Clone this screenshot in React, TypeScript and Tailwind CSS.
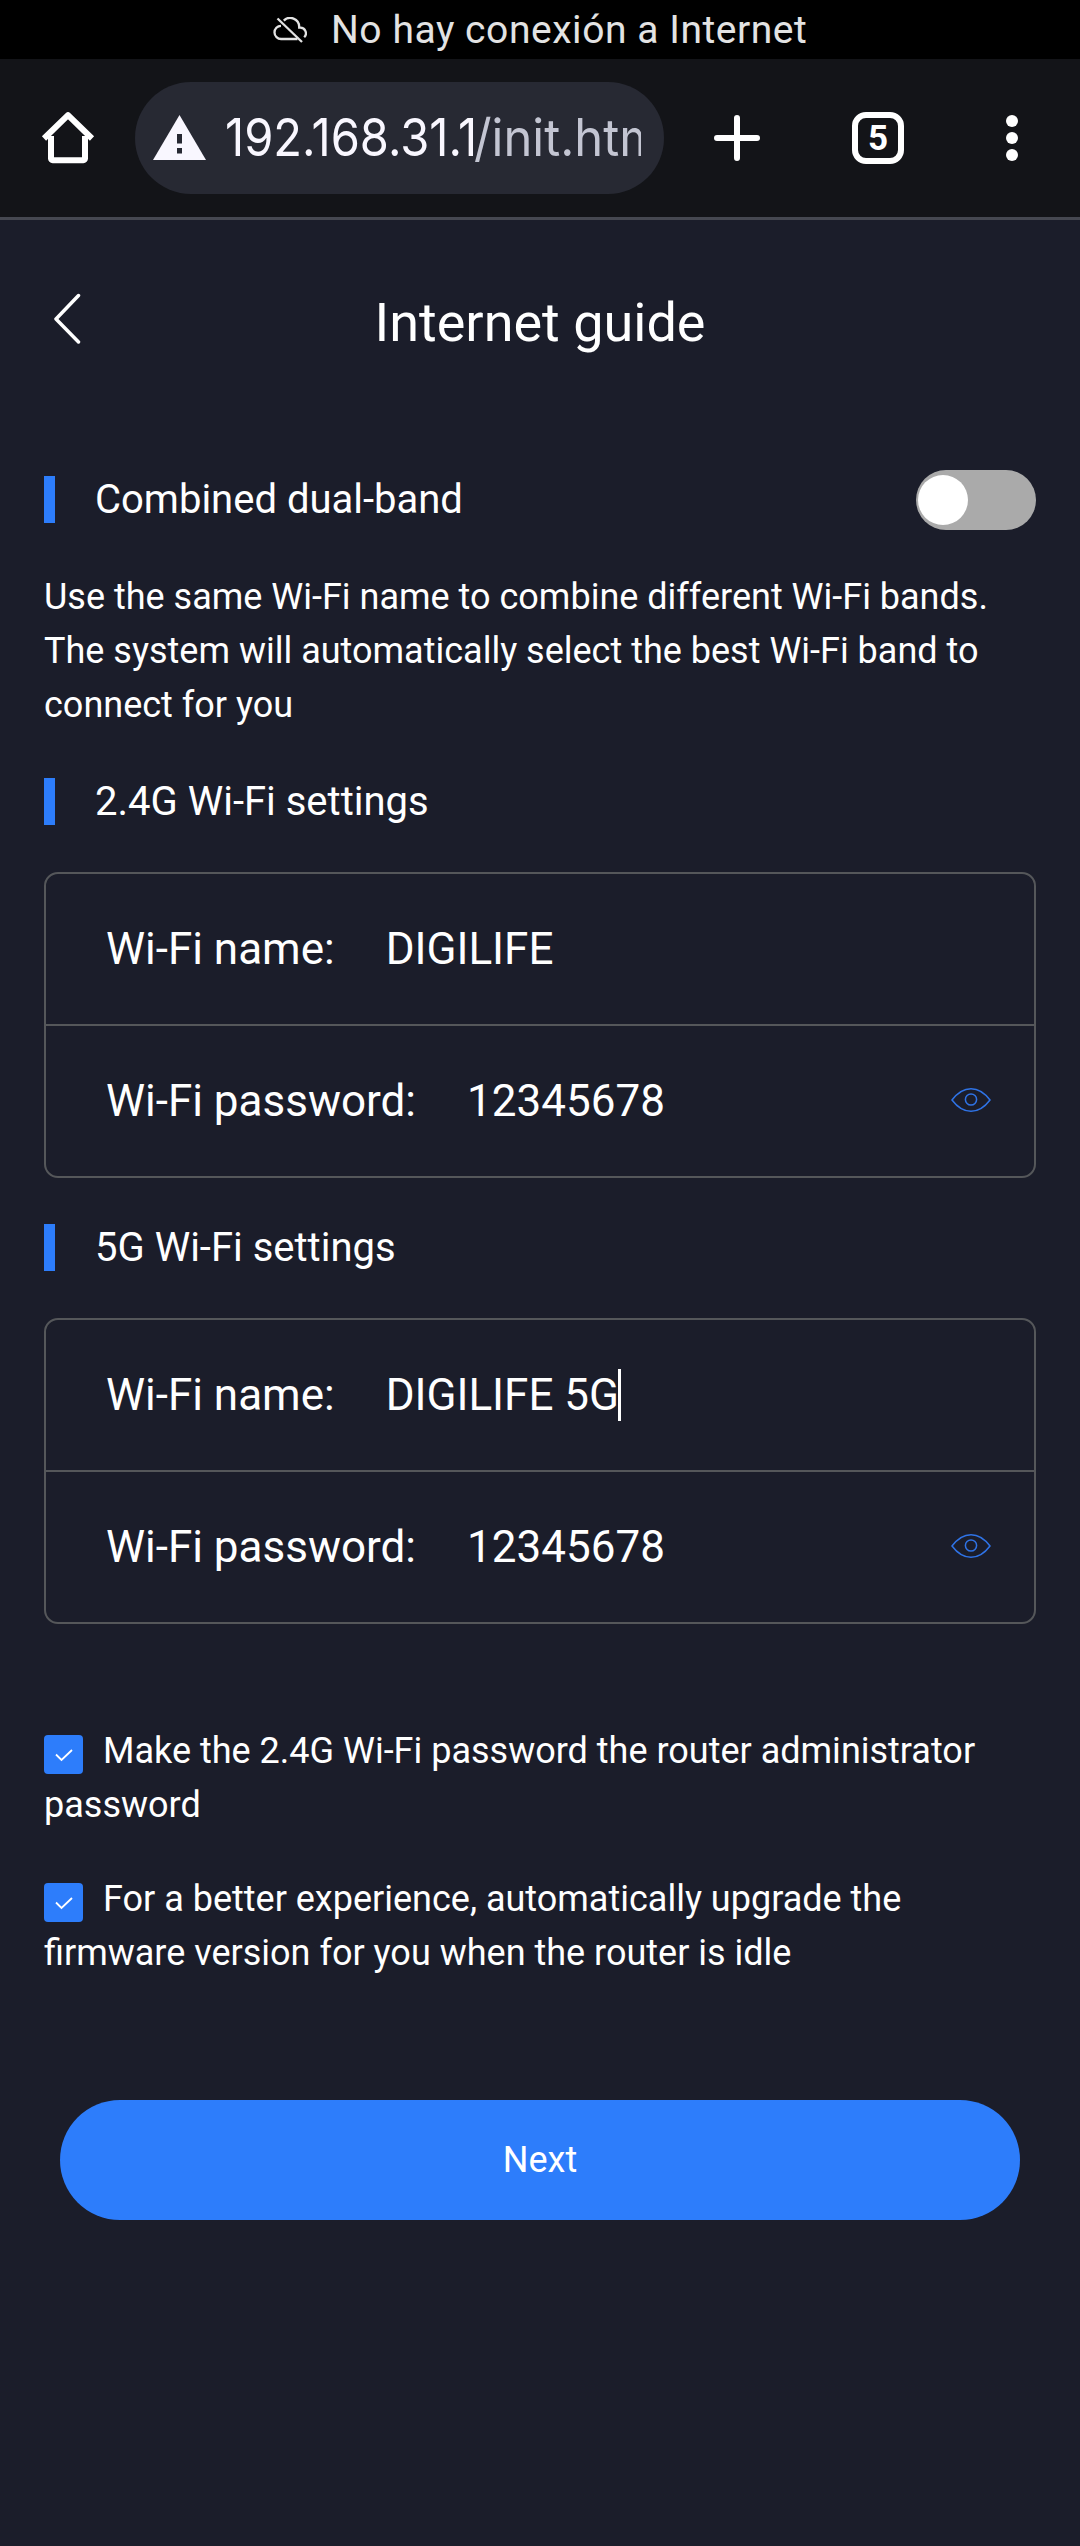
function CloudOffIcon() {
  return (
    <svg width="34" height="26" viewBox="0 0 34 26" fill="none" stroke="#e3e3e3" strokeWidth="2.3">
      <path d="M4.5 1.5 29 25" />
      <path d="M24.5 22H8.2A6.6 6.6 0 0 1 8 8.8" />
      <path d="M10.8 3.6a9 9 0 0 1 15.4 6.2v.9h1a5.6 5.6 0 0 1 4 9.6" />
    </svg>
  );
}

function HomeIcon() {
  return (
    <svg width="54" height="54" viewBox="0 0 54 54" fill="none" stroke="#fff" strokeWidth="6" strokeLinecap="round" strokeLinejoin="round">
      <path d="M3 27.500 27 4.200l24 23.300" strokeLinecap="butt" />
      <path d="M10 25V47.6a1.6 1.6 0 0 0 1.6 1.6h30.8a1.6 1.6 0 0 0 1.6-1.6V25" strokeLinecap="butt" />
    </svg>
  );
}

function WarningIcon() {
  return (
    <svg width="53" height="45" viewBox="0 0 53 45" className="mb-[2px] shrink-0">
      <path d="M26.5 0 53 45H0Z" fill="#f9f7ff" />
      <path d="M24 19h5v9.5h-5zM24 33h5v5.500h-5z" fill="#272933" />
    </svg>
  );
}

function EyeIcon() {
  return (
    <svg width="40" height="26" viewBox="0 0 40 26" fill="none" stroke="#2f73e6" strokeWidth="1.5">
      <path d="M1 13C7 5 13 1.700 20 1.700S33 5 39 13C33 21 27 24.300 20 24.300S7 21 1 13Z" />
      <circle cx="20" cy="12.500" r="5.600" />
    </svg>
  );
}

function StatusBar() {
  return (
    <div className="flex h-[59px] items-center bg-black pl-[273px]">
      <CloudOffIcon />
      <span className="ml-[24px] pt-[2px] text-[39px] leading-[57px] tracking-[0.55px] whitespace-nowrap text-[#e3e3e3]">
        No hay conexión a Internet
      </span>
    </div>
  );
}

function BrowserBar() {
  return (
    <div className="flex h-[161px] items-center border-b-3 border-[#464851] bg-[#131418] pl-[41px]">
      <HomeIcon />
      <div className="ml-10 flex h-28 w-[529px] items-center rounded-full bg-[#272933] pl-[18px]">
        <WarningIcon />
        <div className="ml-[19px] flex w-[416px] overflow-hidden font-['Inter'] text-[52px] leading-[70px] whitespace-nowrap">
          <span className="w-[249px] shrink-0 origin-left scale-x-[0.905] text-[#f9f7ff]">192.168.31.1</span>
          <span className="shrink-0 origin-left scale-x-[0.94] text-[#c3c5d2]">/init.html</span>
        </div>
      </div>
      <svg width="46" height="46" viewBox="0 0 46 46" className="ml-[50px]" stroke="#fff" strokeWidth="6" strokeLinecap="round">
        <path d="M23 3v40M3 23h40" />
      </svg>
      <div className="ml-[92px] flex h-[52px] w-[52px] items-center justify-center rounded-[14px] border-6 border-white text-[35px] leading-none font-bold text-white">
        5
      </div>
      <div className="ml-[102px] flex flex-col gap-[5px]">
        <span className="size-3 rounded-full bg-white" />
        <span className="size-3 rounded-full bg-white" />
        <span className="size-3 rounded-full bg-white" />
      </div>
    </div>
  );
}

function SectionTitle({ children }: { children: string }) {
  return (
    <h2 className="flex h-[47px] items-center gap-10 text-[40px] leading-[47px]">
      <span className="h-[47px] w-[11px] bg-[#2d7dfb]" />
      {children}
    </h2>
  );
}

function WifiCard({ name, password, focused = false }: { name: string; password: string; focused?: boolean }) {
  return (
    <div className="mt-[47px] rounded-[14px] border-2 border-[#55575a] text-[44px] leading-[52px]">
      <div className="flex h-[152px] items-center border-b-2 border-[#55575a] pl-[60px]">
        <span>Wi-Fi name:</span>
        <span className="ml-[51px]">{name}</span>
        {focused && <span className="-ml-px h-[52px] w-[3px] bg-white" />}
      </div>
      <div className="flex h-[150px] items-center pr-[43px] pl-[60px]">
        <span>Wi-Fi password:</span>
        <span className="ml-[51px]">{password}</span>
        <span className="mb-[3px] ml-auto">
          <EyeIcon />
        </span>
      </div>
    </div>
  );
}

function CheckOption({ children }: { children: string }) {
  return (
    <p className="text-[36px] leading-[54px]">
      <span className="mt-[11px] mr-5 inline-flex size-[39px] items-center justify-center rounded-[4px] bg-[#2d7dfb] align-top">
        <svg width="18" height="14" viewBox="0 0 18 14" fill="none" stroke="#fff" strokeWidth="1.800">
          <path d="M1 6.500 6.500 12 17 2" />
        </svg>
      </span>
      {children}
    </p>
  );
}

export default function App() {
  return (
    <div className="flex min-h-[2546px] w-[1080px] flex-col bg-[#1b1d2a] font-['Roboto',sans-serif] text-white">
      <StatusBar />
      <BrowserBar />
      <main className="px-11">
        <header className="grid grid-cols-[80px_1fr_80px] pt-[63px]">
          <svg width="28" height="51" viewBox="0 0 28 51" className="mt-[10px] ml-[9px]" fill="none" stroke="#fff" strokeWidth="3.5" strokeLinecap="round" strokeLinejoin="round">
            <path d="M25.500 2.500 3 26 25.500 49" />
          </svg>
          <h1 className="text-center text-[54px] leading-[80px]">Internet guide</h1>
        </header>

        <div className="mt-[107px] flex h-[60px] justify-between">
          <div className="pt-[6px]">
            <SectionTitle>Combined dual-band</SectionTitle>
          </div>
          <div className="flex h-[60px] w-[120px] items-center rounded-full bg-[#aaaaaa] pl-[2px]">
            <span className="size-[50px] rounded-full bg-white" />
          </div>
        </div>
        <p className="mt-10 mb-[46px] text-[36px] leading-[54px]">
          Use the same Wi-Fi name to combine different Wi-Fi bands. The system will automatically select the best Wi-Fi
          band to connect for you
        </p>

        <SectionTitle>2.4G Wi-Fi settings</SectionTitle>
        <WifiCard name="DIGILIFE" password="12345678" />

        <div className="mt-[46px]">
          <SectionTitle>5G Wi-Fi settings</SectionTitle>
          <WifiCard name="DIGILIFE 5G" password="12345678" focused />
        </div>

        <div className="mt-[100px] flex flex-col gap-10">
          <CheckOption>Make the 2.4G Wi-Fi password the router administrator password</CheckOption>
          <CheckOption>
            For a better experience, automatically upgrade the firmware version for you when the router is idle
          </CheckOption>
        </div>

        <button className="mx-4 mt-[120px] block h-[120px] w-[960px] rounded-full bg-[#2d7dfb] text-[36px]">Next</button>
      </main>
    </div>
  );
}
